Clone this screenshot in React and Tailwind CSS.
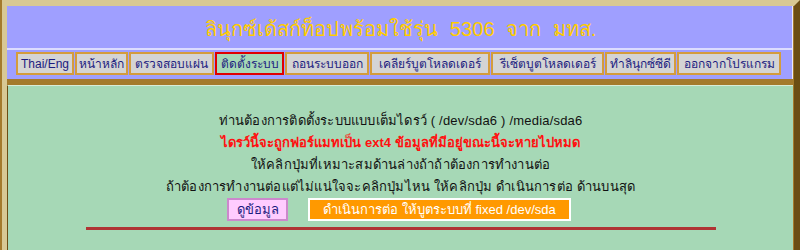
import React from 'react';

const menu = [
  { label: 'Thai/Eng', w: 'w-[58px]' },
  { label: 'หน้าหลัก', w: 'w-[53px]' },
  { label: 'ตรวจสอบแผ่น', w: 'w-[85px]' },
  { label: 'ติดตั้งระบบ', w: 'w-[69px]', active: true },
  { label: 'ถอนระบบออก', w: 'w-[84px]' },
  { label: 'เคลียร์บูตโหลดเดอร์', w: 'w-[120px]' },
  { label: 'รีเซ็ตบูตโหลดเดอร์', w: 'w-[113px]' },
  { label: 'ทำลินุกซ์ซีดี', w: 'w-[71px]' },
  { label: 'ออกจากโปรแกรม', w: 'w-[104px]' },
];

export default function App() {
  return (
    <div
      className="w-[800px] h-[250px] overflow-hidden bg-[#a47a2c] pl-[2px]"
      style={{ fontFamily: '"Liberation Sans", "Noto Sans", sans-serif' }}
    >
      <div className="h-full border-t-[6px] border-l-[5px] border-r-[6px] border-t-[#d8c894] border-l-[#d8c894] border-r-[#6b4d14] bg-[#a47a2c] pr-[1px] flex flex-col gap-[6px]">
        {/* Header */}
        <div className="bg-[#9f9fff] border-r border-r-[#e8e8ff]">
          <div className="h-[44px] flex items-center justify-center border-b-2 border-b-[#dcdcff]">
            <h1 className="text-[20px] text-[#ffcc00] whitespace-nowrap pl-[2px] pt-[4px] tracking-[0.1px]">
              ลินุกซ์เด้สก์ท็อปพร้อมใช้รุ่น&nbsp; 5306&nbsp; จาก&nbsp; มทส.
            </h1>
          </div>
          <div className="h-[29px] flex items-start pt-[2px] pl-[9px] gap-[1px]">
            {menu.map((m) => (
              <button
                key={m.label}
                className={`${m.w} h-[23px] shrink-0 whitespace-nowrap flex items-center justify-center text-[12px] text-[#1c1c80] border-2 ${
                  m.active ? 'border-[#e00000] bg-[#a6d8b6]' : 'border-[#d49c3c] bg-[#d4d4d4]'
                }`}
              >
                {m.label}
              </button>
            ))}
          </div>
        </div>

        {/* Body */}
        <div className="flex-1 bg-[#a6d8b6] border-t border-l border-t-[#d8ecd8] border-l-[#6b4d14]">
          <div className="pt-[24px] flex flex-col items-center text-[13px] text-[#111] leading-[22px] whitespace-nowrap">
            <p className="tracking-[0.2px]">ท่านต้องการติดตั้งระบบแบบเต็มไดรว์ ( /dev/sda6 ) /media/sda6</p>
            <p className="text-[#ff1010] font-bold">
              ไดรว์นี้จะถูกฟอร์แมทเป็น ext4 ข้อมูลที่มีอยู่ขณะนี้จะหายไปหมด
            </p>
            <p className="tracking-[0.2px]">ให้คลิกปุ่มที่เหมาะสมด้านล่างถ้าถ้าต้องการทำงานต่อ</p>
            <p className="tracking-[0.2px]">ถ้าต้องการทำงานต่อแต่ไม่แน่ใจจะคลิกปุ่มไหน ให้คลิกปุ่ม ดำเนินการต่อ ด้านบนสุด</p>
            <div className="flex gap-[20px] pr-[3px]">
              <button className="w-[61px] h-[23px] bg-[#ffccff] border-2 border-[#cc88cc] text-[13px] text-[#1c1c80] flex items-center justify-center">
                ดูข้อมูล
              </button>
              <button className="w-[263px] h-[23px] bg-[#ff9900] border-2 border-white text-[13px] text-white flex items-center justify-center">
                ดำเนินการต่อ ให้บูตระบบที่ fixed /dev/sda
              </button>
            </div>
            <div className="w-[630px] h-[3px] bg-[#b03434] mt-[6px]" />
          </div>
        </div>
      </div>
    </div>
  );
}
